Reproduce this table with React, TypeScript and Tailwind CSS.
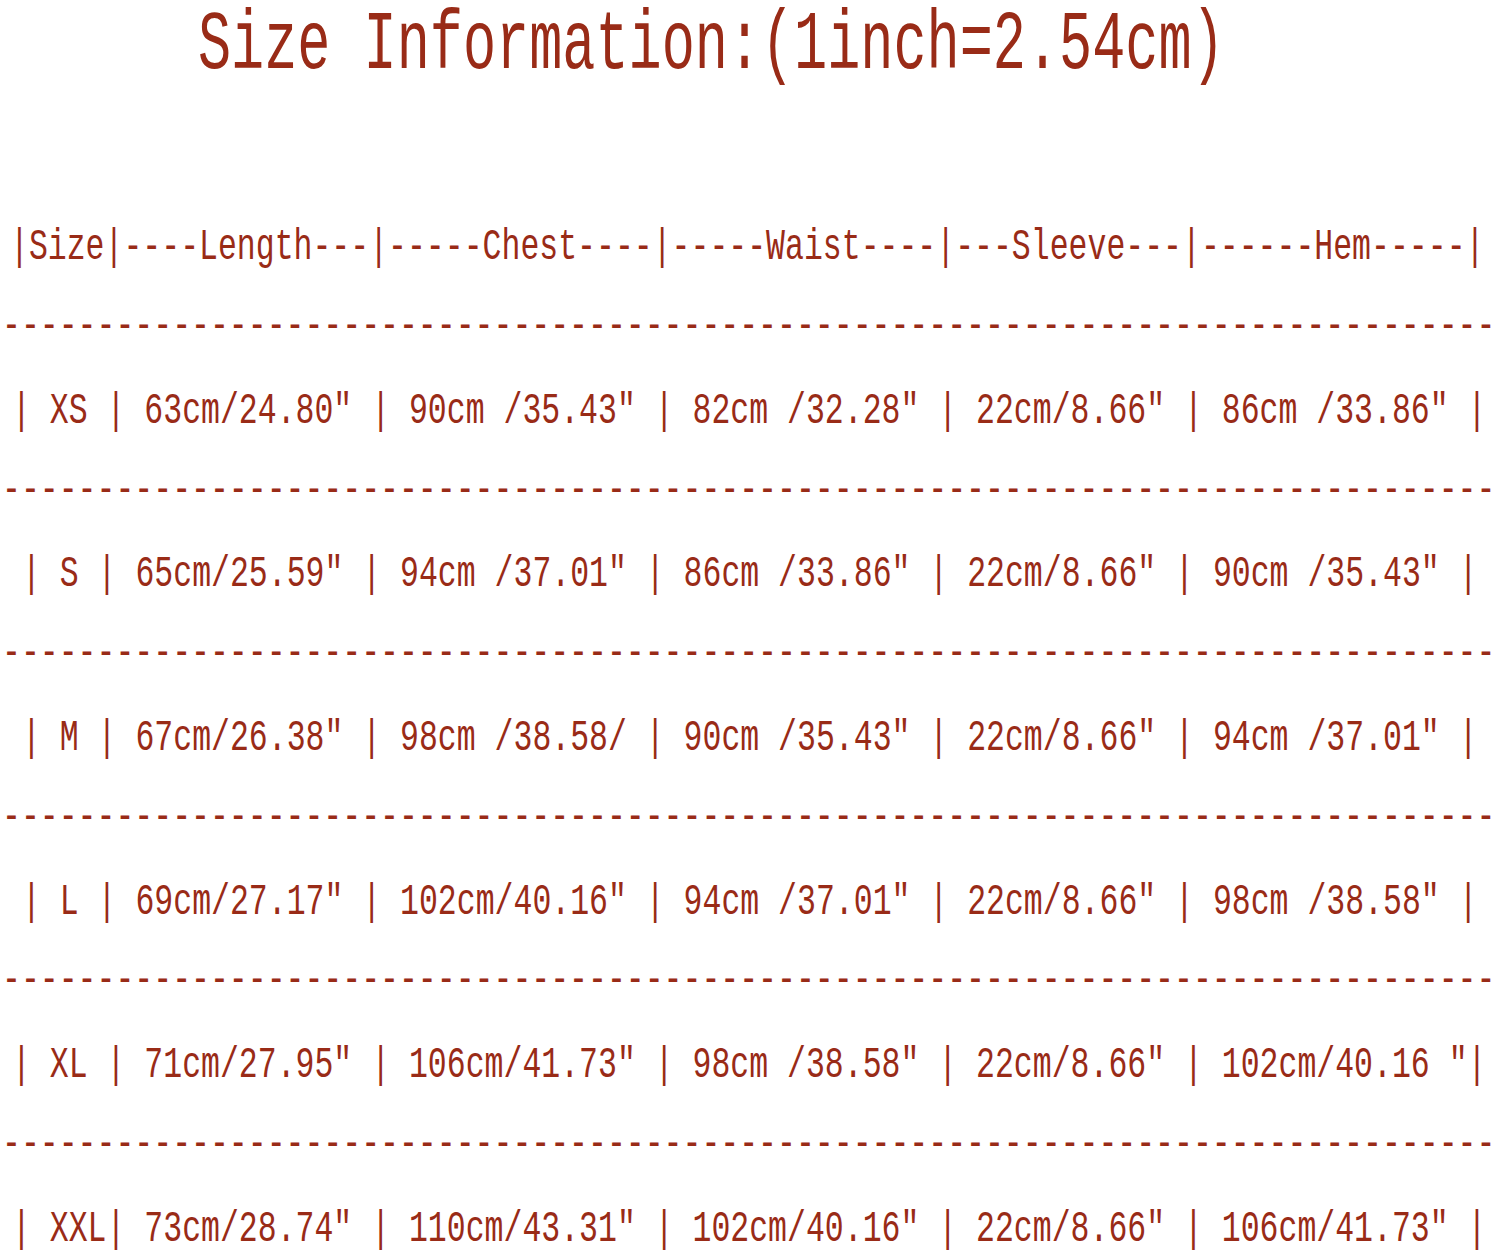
const rows = [
  { text: '|Size|----Length---|-----Chest----|-----Waist----|---Sleeve---|------Hem-----|', pad: 'pl-[10px]' },
  { text: '| XS | 63cm/24.80" | 90cm /35.43" | 82cm /32.28" | 22cm/8.66" | 86cm /33.86" |', pad: 'pl-[12px]' },
  { text: '| S | 65cm/25.59" | 94cm /37.01" | 86cm /33.86" | 22cm/8.66" | 90cm /35.43" |', pad: 'pl-[22px]' },
  { text: '| M | 67cm/26.38" | 98cm /38.58/ | 90cm /35.43" | 22cm/8.66" | 94cm /37.01" |', pad: 'pl-[22px]' },
  { text: '| L | 69cm/27.17" | 102cm/40.16" | 94cm /37.01" | 22cm/8.66" | 98cm /38.58" |', pad: 'pl-[22px]' },
  { text: '| XL | 71cm/27.95" | 106cm/41.73" | 98cm /38.58" | 22cm/8.66" | 102cm/40.16 "|', pad: 'pl-[12px]' },
  { text: '| XXL| 73cm/28.74" | 110cm/43.31" | 102cm/40.16" | 22cm/8.66" | 106cm/41.73" |', pad: 'pl-[12px]' },
];

const dashes = "-".repeat(79);

// one line of the fixed-width chart, stretched tall like the narrow font in the original image
const ChartLine = ({ text, pad }: { text: string; pad: string }) => (
  <div className={`h-[81.8px] flex items-center ${pad}`}>
    <span className="whitespace-pre text-[31.5px] leading-none scale-y-[1.39] inline-block">{text}</span>
  </div>
);

export default function App() {
  return (
    <div
      className="w-[1500px] h-[1258px] bg-white overflow-hidden text-[#992b17]"
      style={{ fontFamily: '"Liberation Mono", "DejaVu Sans Mono", monospace' }}
    >
      {/* Title */}
      <div className="h-[94px] flex items-center pl-[198px]">
        <span className="whitespace-pre text-[55.2px] leading-none scale-y-[1.52] inline-block">
          Size Information:(1inch=2.54cm)
        </span>
      </div>

      {/* Size table */}
      <div className="mt-[113px] flex flex-col">
        {rows.map((row, i) => (
          <div key={i}>
            <ChartLine text={row.text} pad={row.pad} />
            {i < rows.length - 1 && <ChartLine text={dashes} pad="pl-[2px] pb-[6px]" />}
          </div>
        ))}
      </div>
    </div>
  );
}
